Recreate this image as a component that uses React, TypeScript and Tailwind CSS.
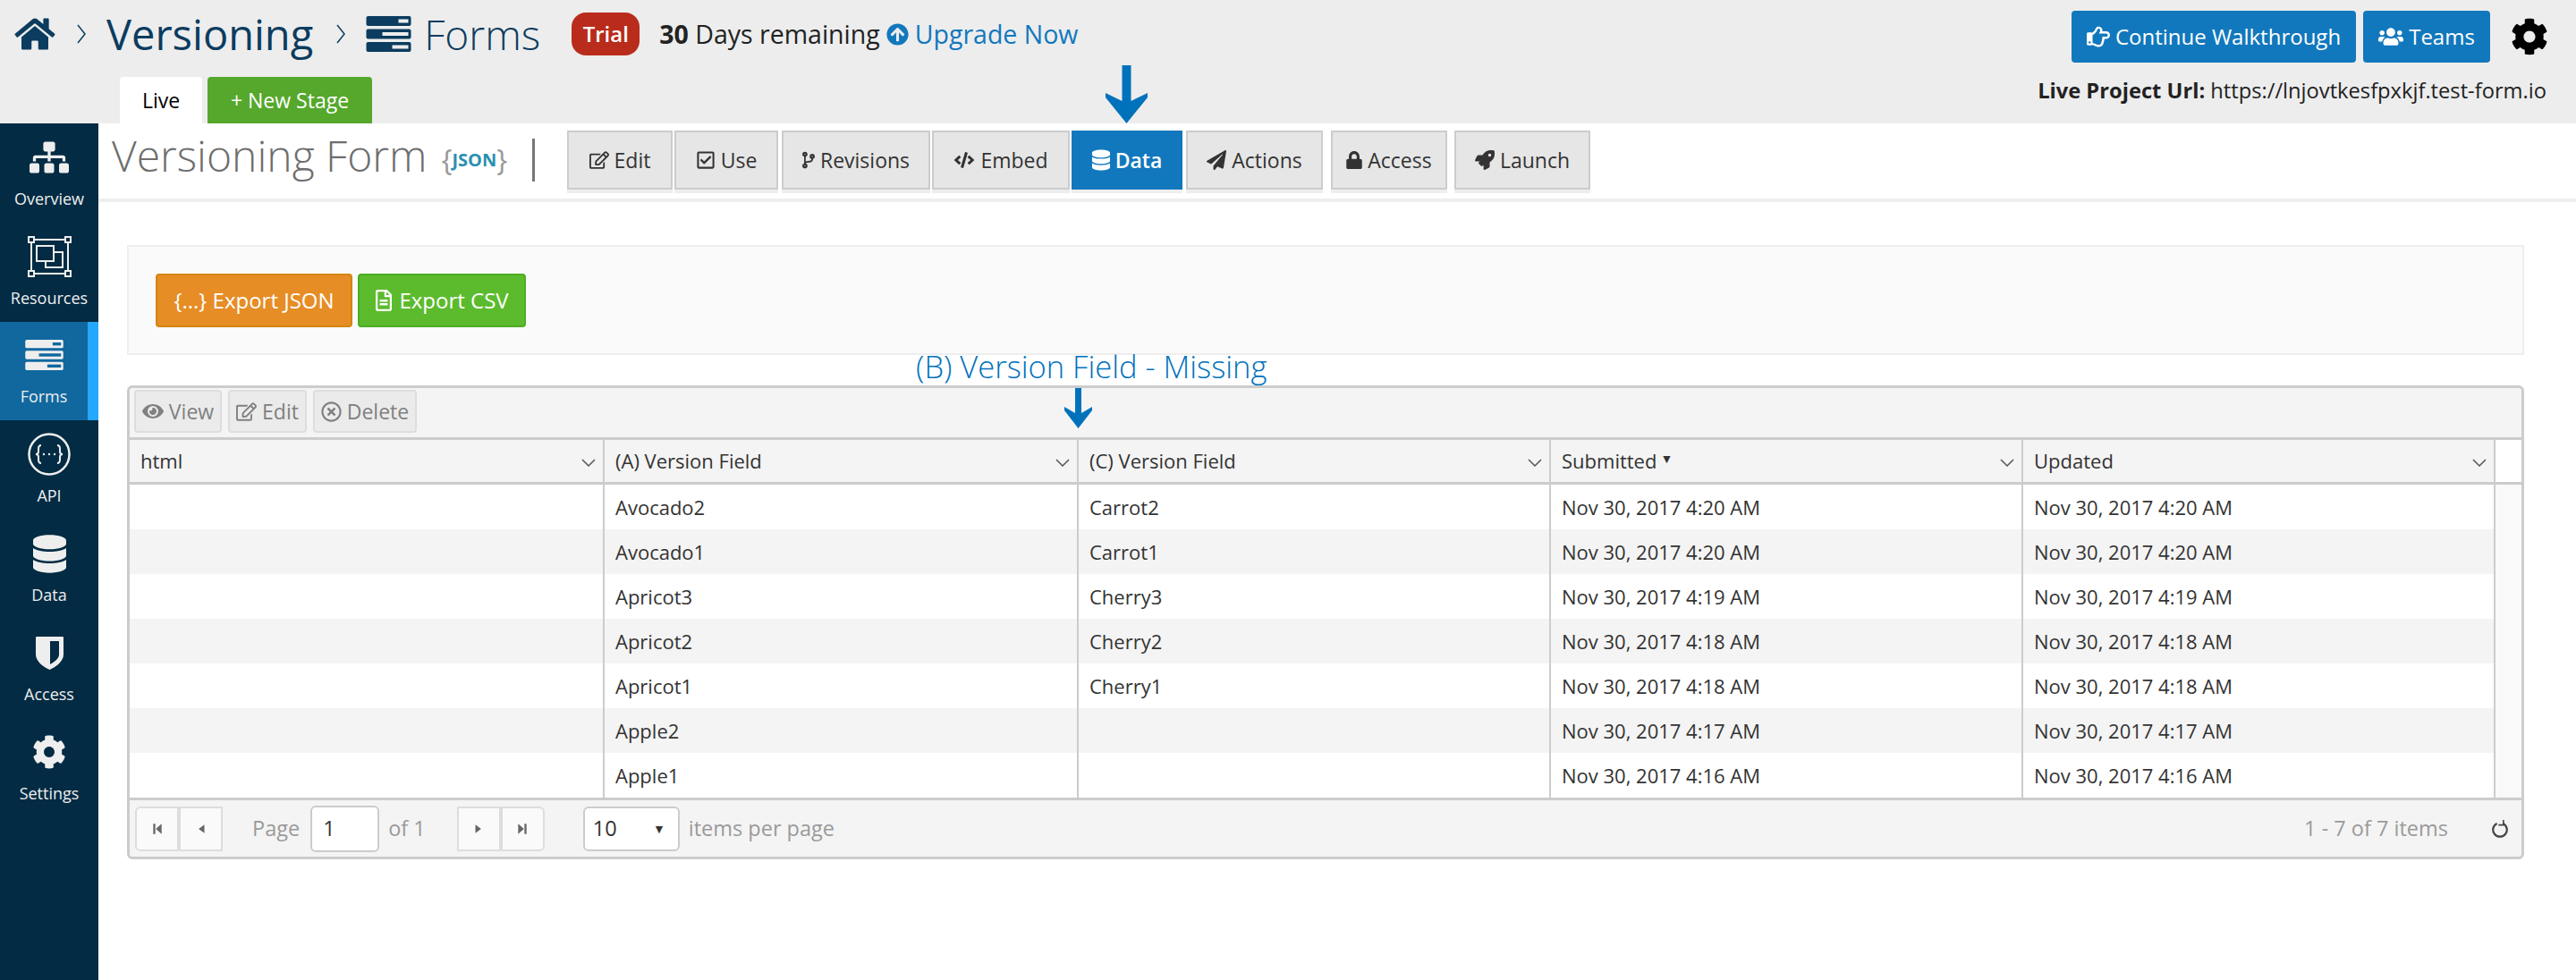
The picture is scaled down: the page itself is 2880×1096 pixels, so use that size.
import {
  FaHome,
  FaCog,
  FaSitemap,
  FaDatabase,
  FaArrowCircleUp,
  FaRegHandPointRight,
  FaUsers,
  FaRegEdit,
  FaRegCheckSquare,
  FaCodeBranch,
  FaCode,
  FaPaperPlane,
  FaLock,
  FaRocket,
  FaRegFileAlt,
  FaEye,
  FaRegTimesCircle,
} from "react-icons/fa";
import type { ReactNode } from "react";

const rows = [
  ["Avocado2", "Carrot2", "Nov 30, 2017 4:20 AM"],
  ["Avocado1", "Carrot1", "Nov 30, 2017 4:20 AM"],
  ["Apricot3", "Cherry3", "Nov 30, 2017 4:19 AM"],
  ["Apricot2", "Cherry2", "Nov 30, 2017 4:18 AM"],
  ["Apricot1", "Cherry1", "Nov 30, 2017 4:18 AM"],
  ["Apple2", "", "Nov 30, 2017 4:17 AM"],
  ["Apple1", "", "Nov 30, 2017 4:16 AM"],
];

function FormsIcon({ bar, slot, className }: { bar: string; slot: string; className: string }) {
  return (
    <svg viewBox="0 0 50 40" className={className}>
      <rect x="0" y="0" width="50" height="11" rx="2" fill={bar} />
      <rect x="0" y="14.5" width="50" height="11" rx="2" fill={bar} />
      <rect x="0" y="29" width="50" height="11" rx="2" fill={bar} />
      <rect x="36" y="3.5" width="11" height="4" fill={slot} />
      <rect x="18" y="18" width="29" height="4" fill={slot} />
      <rect x="29" y="32.5" width="18" height="4" fill={slot} />
    </svg>
  );
}

function ResourcesIcon() {
  return (
    <svg viewBox="0 0 49 46" className="h-[46px] w-[49px]" fill="none" stroke="#eeeeee" strokeWidth="2">
      <rect x="4" y="4" width="41" height="38" />
      <rect x="1" y="1" width="6" height="6" fill="#032b43" />
      <rect x="42" y="1" width="6" height="6" fill="#032b43" />
      <rect x="1" y="39" width="6" height="6" fill="#032b43" />
      <rect x="42" y="39" width="6" height="6" fill="#032b43" />
      <rect x="10" y="11" width="19" height="17" />
      <path d="M29 18h10v17H20v-7" />
    </svg>
  );
}

function ApiIcon() {
  return (
    <svg viewBox="0 0 48 48" className="h-[48px] w-[48px]" fill="none" stroke="#eeeeee">
      <circle cx="24" cy="24" r="22.5" strokeWidth="2.5" />
      <path
        d="M15 14c-3 0-3 2-3 4v3c0 2-1 3-3 3 2 0 3 1 3 3v3c0 2 0 4 3 4M33 14c3 0 3 2 3 4v3c0 2 1 3 3 3-2 0-3 1-3 3v3c0 2 0 4-3 4"
        strokeWidth="2"
      />
      <circle cx="18" cy="24" r="1.2" fill="#eeeeee" stroke="none" />
      <circle cx="24" cy="24" r="1.2" fill="#eeeeee" stroke="none" />
      <circle cx="30" cy="24" r="1.2" fill="#eeeeee" stroke="none" />
    </svg>
  );
}

function ShieldIcon() {
  return (
    <svg viewBox="0 0 31 37" className="h-[37px] w-[31px]">
      <path
        fillRule="evenodd"
        fill="#eeeeee"
        d="M1 0h29a1 1 0 0 1 1 1v19c0 8-9 14-15.500 17C9 34 0 28 0 20V1a1 1 0 0 1 1-1zM16 5v26c4-2.500 10-6 10-11V5z"
      />
    </svg>
  );
}

function Crumb({ className }: { className: string }) {
  return (
    <svg viewBox="0 0 10 22" className={"h-[22px] w-[10px] " + className} fill="none" stroke="#0c3c5f" strokeWidth="1.500">
      <path d="M1 1l8 10-8 10" />
    </svg>
  );
}

function SideItem({ icon, label, active }: { icon: ReactNode; label: string; active?: boolean }) {
  return (
    <div
      className={
        active
          ? "flex h-[110px] flex-col items-center justify-end border-r-[12px] border-[#25a7fd] bg-[#10689f] pb-[13px]"
          : "flex h-[111px] flex-col items-center justify-end pb-[13px]"
      }
    >
      <div className="flex h-[50px] items-center justify-center">{icon}</div>
      <span className="mt-[7px] text-[18px] leading-[28px] font-medium text-[#eeeeee]">{label}</span>
    </div>
  );
}

function NavButton({ icon, label, width, active }: { icon: ReactNode; label: string; width: string; active?: boolean }) {
  return (
    <div
      className={
        (active
          ? "border-[#1278bd] bg-[#1278bd] font-semibold text-white"
          : "border-[#cccccc] bg-[#e6e6e6] text-[#333333]") +
        " flex h-[66px] items-center justify-center gap-[6px] border-2 text-[23px] shadow-[0_4px_0_#eeeeee] " +
        width
      }
    >
      {icon}
      {label}
    </div>
  );
}

function Chevron() {
  return (
    <svg viewBox="0 0 16 9" className="h-[9px] w-[16px]" fill="none" stroke="#555555" strokeWidth="1.500">
      <path d="M1 1l7 7 7-7" />
    </svg>
  );
}

function HeadCell({ label, sorted, width }: { label: string; sorted?: boolean; width: string }) {
  return (
    <div className={"flex h-full items-center justify-between border-r-2 border-[#cccccc] pr-[8px] pl-[12px] " + width}>
      <span className="flex items-center gap-[4px]">
        {label}
        {sorted && <span className="mb-[6px] text-[14px] text-[#333333]">▼</span>}
      </span>
      <span className="mt-[4px]">
        <Chevron />
      </span>
    </div>
  );
}

function Cell({ children, width }: { children?: ReactNode; width: string }) {
  return <div className={"flex h-full items-center border-r-2 border-[#cccccc] pl-[12px] " + width}>{children}</div>;
}

function GridTool({ icon, label, width }: { icon: ReactNode; label: string; width: string }) {
  return (
    <div
      className={
        "flex h-[48px] items-center justify-center gap-[6px] rounded-[4px] border-2 border-[#dddddd] bg-[#ebebeb] text-[23px] text-[#808080] " +
        width
      }
    >
      {icon}
      {label}
    </div>
  );
}

function PageBtn({ d, round }: { d: string; round: string }) {
  return (
    <div className={"flex h-[50px] w-[49px] items-center justify-center border-2 border-[#dddddd] bg-[#fafafa] " + round}>
      <svg viewBox="0 0 12 12" className="h-[14px] w-[14px]" fill="#666666">
        <path d={d} />
      </svg>
    </div>
  );
}

export default function App() {
  return (
    <div className="relative h-[1096px] w-[2880px] overflow-hidden bg-white font-['Open_Sans',sans-serif] text-[#333333]">
      {/* Top bar */}
      <header className="flex h-[138px] justify-between bg-[#ededed]">
        <div className="flex flex-col justify-between">
          <div className="flex h-[76px] items-center pl-[16px] text-[#0c3c5f]">
            <FaHome className="h-[40px] w-[46px]" />
            <Crumb className="ml-[24px]" />
            <span className="ml-[23px] text-[47px] leading-none">Versioning</span>
            <Crumb className="ml-[26px]" />
            <FormsIcon bar="#0c3c5f" slot="#ededed" className="ml-[23px] h-[40px] w-[51px]" />
            <span className="ml-[14px] text-[46px] leading-none font-light">Forms</span>
            <span className="ml-[35px] flex h-[48px] w-[76px] items-center justify-center rounded-[16px] bg-[#b92c1c] text-[24px] font-semibold text-white">
              Trial
            </span>
            <span className="ml-[22px] text-[28.500px] text-[#222222]">
              <b className="font-bold">30</b> Days remaining
            </span>
            <FaArrowCircleUp className="ml-[7px] h-[25px] w-[25px] text-[#1278bd]" />
            <span className="ml-[7px] text-[28.500px] text-[#1278bd]">Upgrade Now</span>
          </div>
          <div className="ml-[134px] flex h-[52px] gap-[6px] text-[23px]">
            <div className="flex w-[92px] items-center justify-center rounded-t-[4px] bg-white text-black">Live</div>
            <div className="flex w-[184px] items-center justify-center rounded-t-[4px] bg-[#55a82b] font-medium text-white">
              + New Stage
            </div>
          </div>
        </div>
        <div className="flex flex-col items-end pt-[12px] pr-[33px]">
          <div className="flex items-center">
            <div className="flex h-[58px] w-[318px] items-center justify-center gap-[6px] rounded-[4px] bg-[#1278bd] text-[24px] font-medium text-white">
              <FaRegHandPointRight className="h-[26px] w-[26px]" />
              Continue Walkthrough
            </div>
            <div className="ml-[8px] flex h-[58px] w-[142px] items-center justify-center gap-[6px] rounded-[4px] bg-[#1278bd] text-[24px] font-medium text-white">
              <FaUsers className="h-[26px] w-[28px]" />
              Teams
            </div>
            <FaCog className="mr-[-2px] ml-[23px] h-[42px] w-[42px] text-black" />
          </div>
          <div className="mt-[17px] text-[23.700px] leading-[28px] text-[#222222]">
            <b className="font-bold">Live Project Url:</b> https://lnjovtkesfpxkjf.test-form.io
          </div>
        </div>
      </header>

      <div className="flex h-[958px]">
        {/* Sidebar */}
        <aside className="w-[110px] shrink-0 bg-[#032b43]">
          <SideItem icon={<FaSitemap className="h-[38px] w-[44px] text-[#eeeeee]" />} label="Overview" />
          <SideItem icon={<ResourcesIcon />} label="Resources" />
          <SideItem icon={<FormsIcon bar="#eeeeee" slot="#10689f" className="h-[34px] w-[43px]" />} label="Forms" active />
          <SideItem icon={<ApiIcon />} label="API" />
          <SideItem icon={<FaDatabase className="h-[43px] w-[37px] text-[#eeeeee]" />} label="Data" />
          <SideItem icon={<ShieldIcon />} label="Access" />
          <SideItem icon={<FaCog className="h-[38px] w-[38px] text-[#eeeeee]" />} label="Settings" />
        </aside>

        <main className="min-w-0 flex-1">
          {/* Title row */}
          <div className="flex h-[88px] items-start border-b-4 border-[#eeeeee] pt-[8px]">
            <div className="ml-[15px] flex h-[66px] w-[470px] items-center">
              <span className="mb-[10px] text-[48px] leading-none font-light whitespace-nowrap text-[#6e6e6e]">Versioning Form</span>
              <span className="ml-[16px] flex items-center text-[32px] leading-none text-[#999999]">
                {"{"}
                <span className="text-[20px] font-bold text-[#2a8fb0]">JSON</span>
                {"}"}
              </span>
              <span className="ml-[28px] h-[48px] w-[3px] shrink-0 bg-[#777777]" />
            </div>
            <div className="ml-[39px] flex">
              <NavButton width="w-[118px]" label="Edit" icon={<FaRegEdit className="h-[22px] w-[22px]" />} />
              <NavButton width="ml-[2px] w-[116px]" label="Use" icon={<FaRegCheckSquare className="h-[22px] w-[22px]" />} />
              <NavButton width="ml-[4px] w-[166px]" label="Revisions" icon={<FaCodeBranch className="h-[22px] w-[14px]" />} />
              <NavButton width="ml-[2px] w-[154px]" label="Embed" icon={<FaCode className="h-[18px] w-[24px]" />} />
              <NavButton width="ml-[2px] w-[124px]" label="Data" active icon={<FaDatabase className="h-[24px] w-[20px]" />} />
              <NavButton width="ml-[4px] w-[153px]" label="Actions" icon={<FaPaperPlane className="h-[22px] w-[22px]" />} />
              <NavButton width="ml-[9px] w-[130px]" label="Access" icon={<FaLock className="h-[20px] w-[18px]" />} />
              <NavButton width="ml-[8px] w-[152px]" label="Launch" icon={<FaRocket className="h-[22px] w-[22px]" />} />
            </div>
          </div>

          {/* Export panel */}
          <div className="mt-[48px] ml-[32px] flex h-[123px] w-[2680px] items-center gap-[6px] border-2 border-[#eeeeee] bg-[#fafafa] pl-[30px]">
            <div className="flex h-[60px] w-[220px] items-center justify-center gap-[6px] rounded-[4px] border-2 border-[#d58512] bg-[#e68d26] text-[24px] font-medium text-white">
              {"{...}"} Export JSON
            </div>
            <div className="flex h-[60px] w-[188px] items-center justify-center gap-[7px] rounded-[4px] border-2 border-[#4cae22] bg-[#5cbb2d] text-[24px] font-medium text-white">
              <FaRegFileAlt className="h-[24px] w-[20px]" />
              Export CSV
            </div>
          </div>

          {/* Grid */}
          <div className="mt-[34px] ml-[32px] w-[2680px] overflow-hidden rounded-[6px] border-[3px] border-[#cccccc] bg-[#f4f4f4] text-[22px]">
            <div className="flex h-[58px] items-start gap-[7px] border-b-[3px] border-[#cccccc] pt-[2px] pl-[5px]">
              <GridTool width="w-[98px]" label="View" icon={<FaEye className="h-[24px] w-[24px]" />} />
              <GridTool width="w-[88px]" label="Edit" icon={<FaRegEdit className="h-[23px] w-[23px]" />} />
              <GridTool width="w-[116px]" label="Delete" icon={<FaRegTimesCircle className="h-[23px] w-[23px]" />} />
            </div>
            <div className="flex h-[50px] border-b-[3px] border-[#cccccc]">
              <HeadCell width="w-[531px]" label="html" />
              <HeadCell width="w-[530px]" label="(A) Version Field" />
              <HeadCell width="w-[528px]" label="(C) Version Field" />
              <HeadCell width="w-[528px]" label="Submitted" sorted />
              <HeadCell width="w-[528px]" label="Updated" />
              <div className="flex-1 bg-white" />
            </div>
            <div className="flex bg-[#f9f9f9]">
              <div>
                {rows.map((row, i) => (
                  <div key={i} className={(i % 2 ? "bg-[#f4f4f4]" : "bg-white") + " flex h-[50px]"}>
                    <Cell width="w-[531px]" />
                    <Cell width="w-[530px]">{row[0]}</Cell>
                    <Cell width="w-[528px]">{row[1]}</Cell>
                    <Cell width="w-[528px]">{row[2]}</Cell>
                    <Cell width="w-[528px]">{row[2]}</Cell>
                  </div>
                ))}
              </div>
            </div>
            <div className="flex h-[66px] items-center justify-between border-t-[3px] border-[#cccccc] pr-[12px] pl-[6px] text-[23.500px] text-[#9a9a9a]">
              <div className="flex items-center">
                <PageBtn round="rounded-l-[6px]" d="M2 1h2v10H2zM10 1v10L4.500 6z" />
                <PageBtn round="" d="M9 2v8L3.500 6z" />
                <span className="ml-[33px]">Page</span>
                <div className="ml-[12px] flex h-[52px] w-[77px] items-center rounded-[6px] border-2 border-[#cccccc] bg-white pl-[12px] text-[#333333]">
                  1
                </div>
                <span className="ml-[10px]">of 1</span>
                <PageBtn round="ml-[35px]" d="M3 2v8l5.500-4z" />
                <PageBtn round="rounded-r-[6px]" d="M2 1v10l5.500-5zM8 1h2v10H8z" />
                <div className="ml-[43px] flex h-[50px] w-[108px] items-center justify-between rounded-[6px] border-2 border-[#cccccc] bg-white pr-[14px] pl-[9px] text-[#333333]">
                  10
                  <span className="text-[14px]">▼</span>
                </div>
                <span className="ml-[10px]">items per page</span>
              </div>
              <div className="flex items-center">
                <span>1 - 7 of 7 items</span>
                <svg viewBox="0 0 18 18" className="mr-[2px] ml-[48px] h-[20px] w-[20px]" fill="none" stroke="#444444" strokeWidth="2">
                  <path d="M12 3.500a7 7 0 1 1-6 0" />
                  <path d="M12.500 0v5H7.500" strokeWidth="1.500" />
                </svg>
              </div>
            </div>
          </div>
        </main>
      </div>

      {/* Annotations drawn over the page */}
      <svg viewBox="0 0 47 65" className="absolute top-[73px] left-[1236px] h-[65px] w-[47px]" fill="#0072bc">
        <path d="M18.500 0h10v40L47 31v5L23.500 65 0 36v-5l18.500 9z" />
      </svg>
      <span className="absolute top-[390px] left-[1024px] text-[34.500px] leading-[40px] font-light text-[#0072bc]">
        (B) Version Field - Missing
      </span>
      <svg viewBox="0 0 31 45" className="absolute top-[434px] left-[1190px] h-[45px] w-[31px]" fill="#0072bc">
        <path d="M12 0h7v28l12-7v4L15.500 45 0 25v-4l12 7z" />
      </svg>
    </div>
  );
}
